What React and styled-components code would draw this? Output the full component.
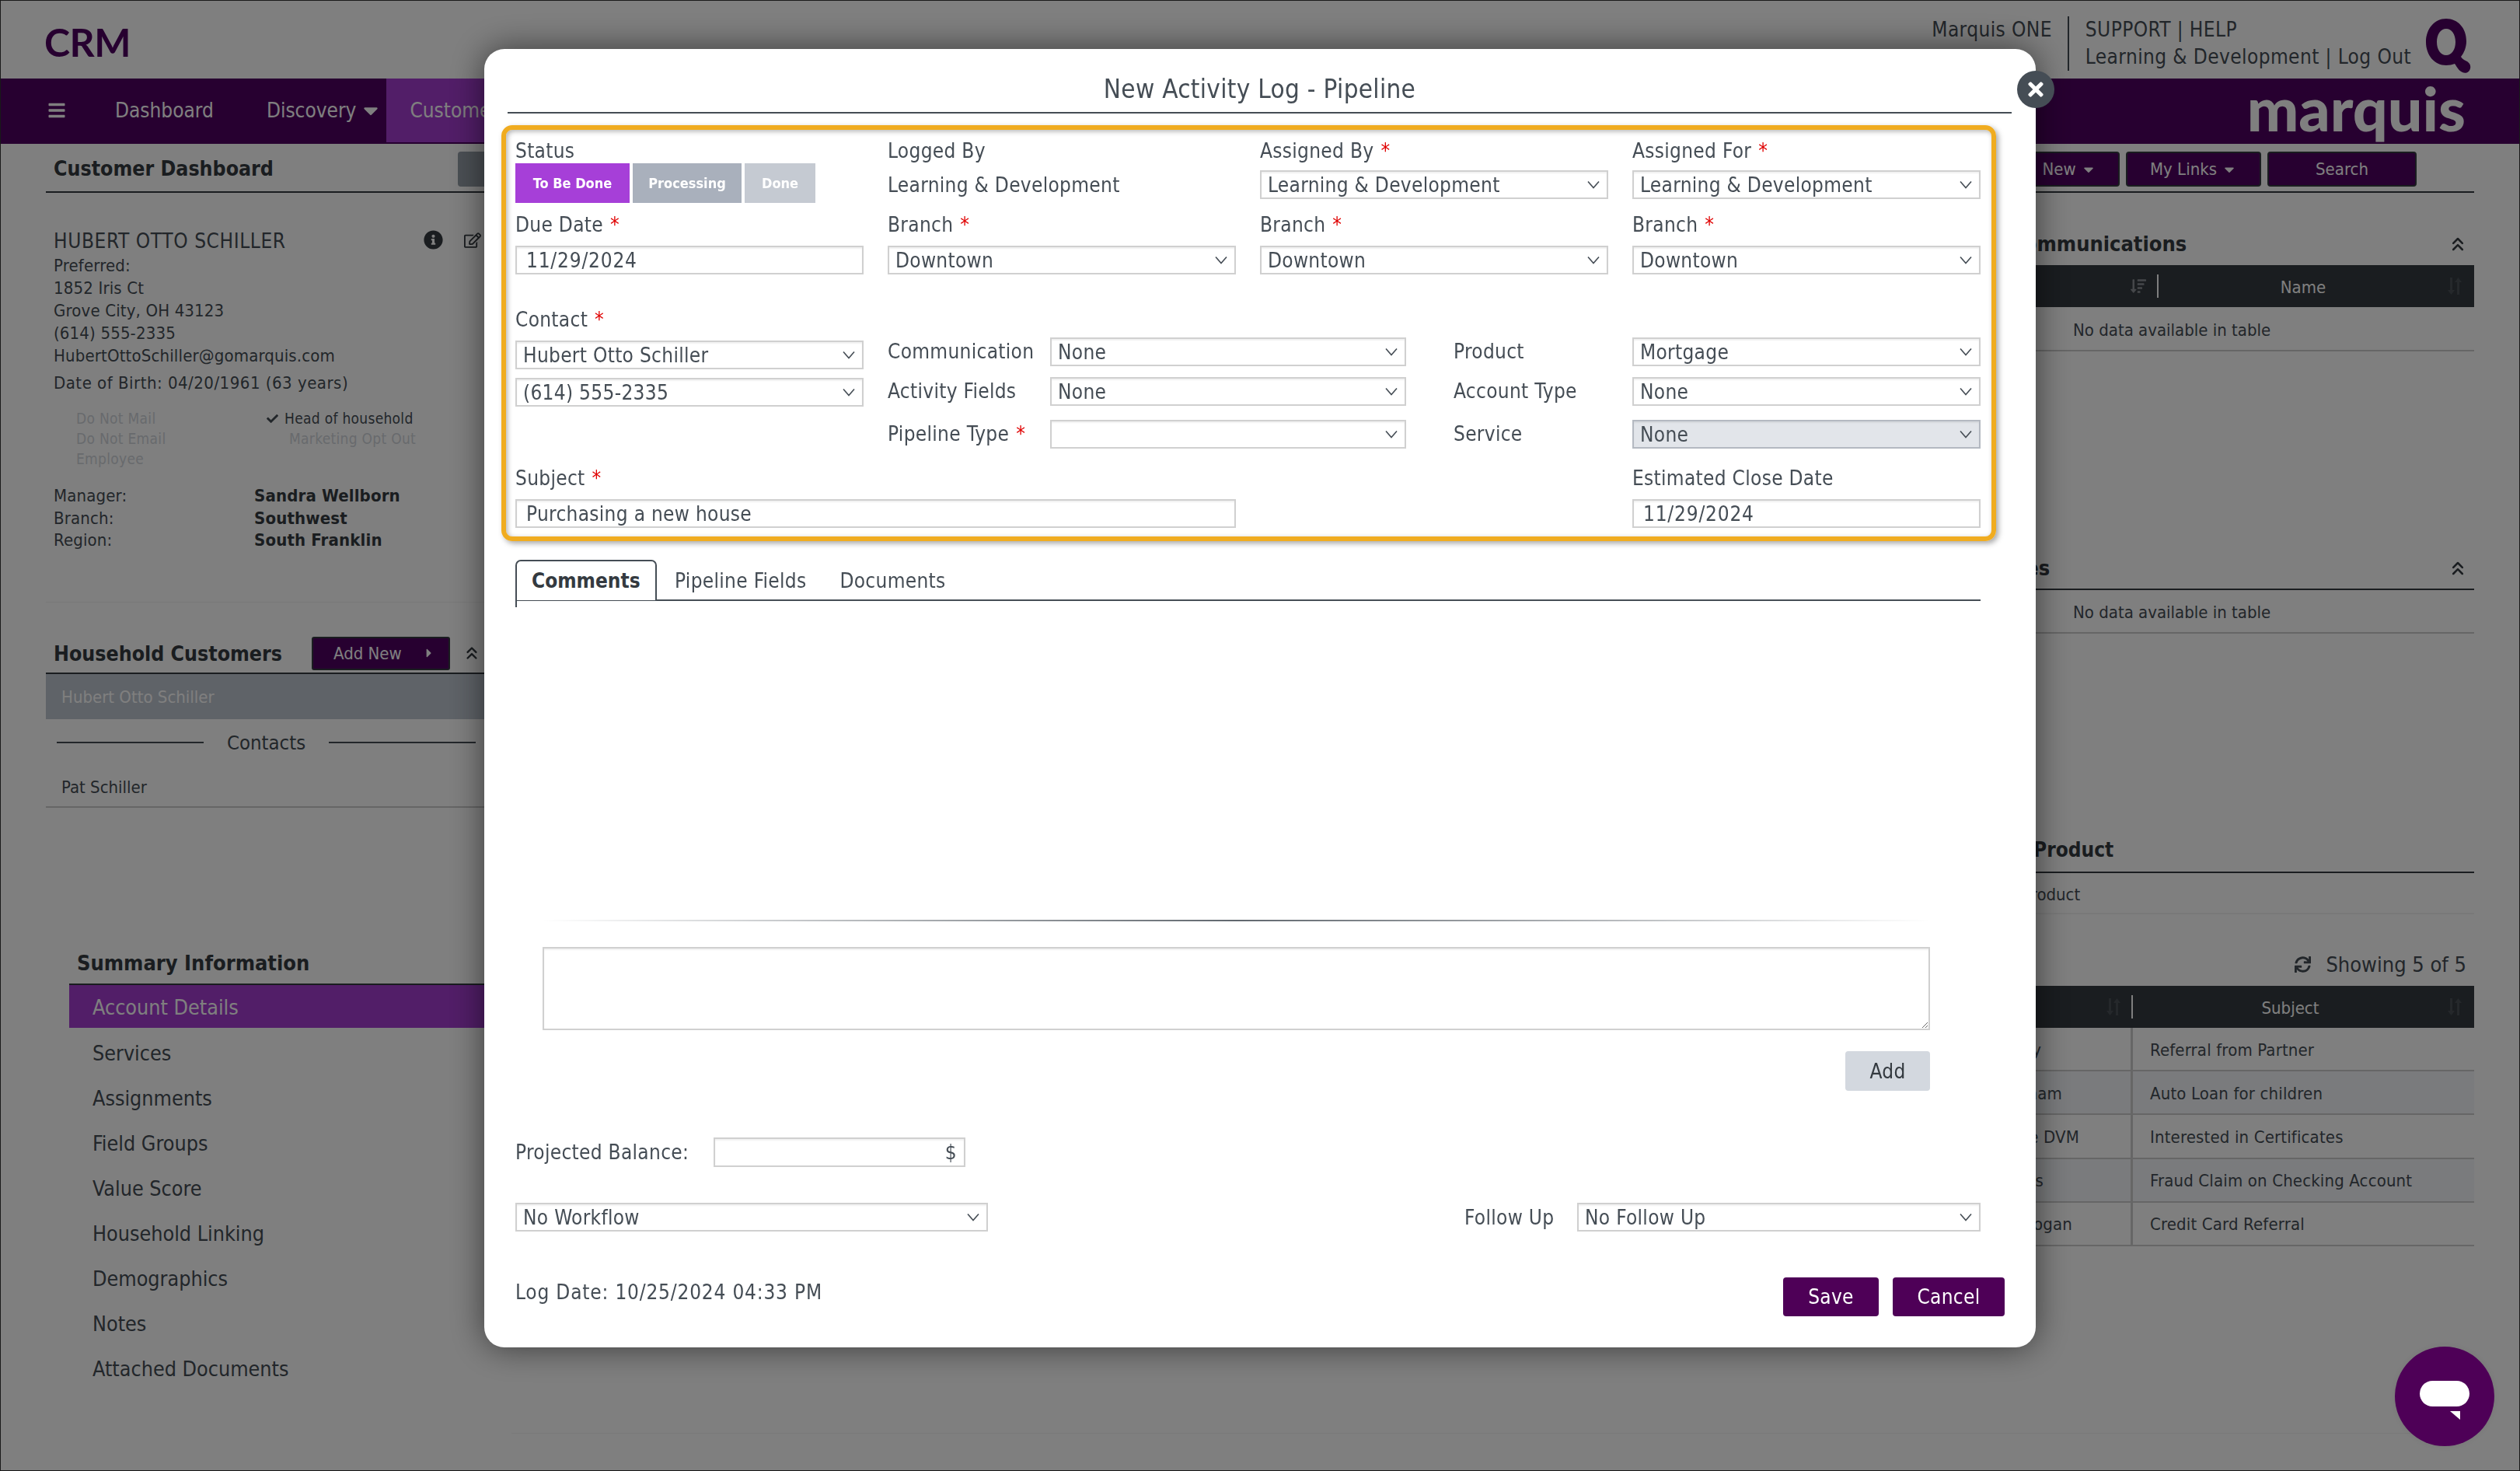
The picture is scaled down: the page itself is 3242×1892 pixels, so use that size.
import React from "react";
import styled, { createGlobalStyle } from "styled-components";
import { FaBars, FaCaretDown, FaCaretRight, FaCheck, FaInfoCircle, FaRegEdit, FaSortAmountDown, FaSync, FaTimes } from "react-icons/fa";
import { ChevronsUp } from "lucide-react";

const FONT = `"DejaVu Sans Condensed", "DejaVu Sans", Tahoma, sans-serif`;

const GlobalStyle = createGlobalStyle`
  html, body {
    margin: 0;
    padding: 0;
    width: 3242px;
    height: 1892px;
    overflow: hidden;
    background: #fff;
    font-family: ${FONT};
  }
  * { box-sizing: border-box; }
`;

/* ---------- page behind the dialog ---------- */

const Page = styled.div`
  width: 3242px;
  height: 1892px;
  border: 1px solid #333;
  background: #fff;
  color: #454d55;
  overflow: hidden;
`;

const TopBar = styled.header`
  height: 100px;
  display: flex;
  justify-content: space-between;
  padding: 20px 62px 0 56px;
`;

const CrmLogo = styled.div`
  margin-top: 7px;
  font-family: Lato, sans-serif;
  font-weight: 700;
  font-size: 50px;
  line-height: 52px;
  letter-spacing: -0.5px;
  color: #4e0060;
`;

const TopRight = styled.div`
  display: flex;
  align-items: flex-start;
  font-size: 26px;
  line-height: 35px;
  letter-spacing: 0.4px;
`;

const TopLinks = styled.div`
  border-left: 2px solid #454d55;
  margin: 0 0 0 20px;
  padding: 0 19px 0 21px;
  height: 70px;
`;

const QWrap = styled.div`
  margin-top: 3px;
`;

const NavBar = styled.nav`
  height: 84px;
  background: #4e0060;
  display: flex;
  align-items: flex-start;
  color: #fff;
  font-size: 26px;
  padding-left: 60px;
  position: relative;
`;

const NavItem = styled.div`
  height: 82px;
  display: flex;
  align-items: center;
  gap: 4px;
  margin-left: ${(p) => p.$ml || 0}px;
  padding: ${(p) => (p.$active ? "0 0 0 30px" : "0")};
  width: ${(p) => p.$w || "auto"};
  background: ${(p) => (p.$active ? "#a43cd0" : "transparent")};
`;

const MarquisLogo = styled.div`
  margin-left: auto;
  margin-right: 69px;
  font-family: Lato, sans-serif;
  font-weight: 900;
  font-size: 79px;
  line-height: 76px;
  color: #fff;
`;

const Toolbar = styled.div`
  height: 63px;
  margin: 0 58px;
  padding: 10px 74px 0 10px;
  display: flex;
  justify-content: space-between;
  border-bottom: 2px solid #343a40;
`;

const ToolbarLeft = styled.div`
  display: flex;
  align-items: flex-start;
  width: 600px;
`;

const PageTitle = styled.h1`
  margin: 0;
  width: 521px;
  font-size: 26.500px;
  line-height: 44px;
  font-weight: 700;
  color: #343a40;
`;

const GreyButton = styled.div`
  width: 80px;
  height: 45px;
  border-radius: 4px;
  background: #969fa9;
`;

const ToolbarRight = styled.div`
  display: flex;
  gap: 8px;
`;

const DarkButton = styled.div`
  width: ${(p) => p.$w}px;
  height: 45px;
  display: flex;
  align-items: center;
  justify-content: center;
  gap: 6px;
  background: #4e0060;
  border: 2px solid #343a40;
  border-radius: 4px;
  color: #fff;
  font-size: 22px;
`;

const Columns = styled.div`
  display: grid;
  grid-template-columns: 592px 1fr 693px;
  margin: 0 58px;
`;

const LeftColumn = styled.div`
  display: flex;
  flex-direction: column;
`;

const CustomerCard = styled.section`
  padding: 48px 10px 0;
  height: 527px;
  border-bottom: 1px solid #f3f3f3;
  font-size: 22px;
  line-height: 29px;
  letter-spacing: 0.15px;
  position: relative;
`;

const CustomerName = styled.div`
  font-size: 26px;
  line-height: 29px;
  letter-spacing: 0.6px;
  margin-bottom: 2px;
`;

const BirthDate = styled.div`
  margin-top: 6px;
  letter-spacing: 0.5px;
`;

const CardIcons = styled.div`
  position: absolute;
  top: 48px;
  left: 486px;
  display: flex;
  align-items: center;
  gap: 27px;
  font-size: 24px;
  color: #343a40;
`;

const Flags = styled.div`
  display: grid;
  grid-template-columns: 245px 1fr;
  margin: 18px 0 0 29px;
  font-size: 19px;
  line-height: 26px;
  letter-spacing: 0.3px;
`;

const Flag = styled.div`
  color: ${(p) => (p.$on ? "#454d55" : "#d0d4da")};
  padding-left: ${(p) => p.$indent || 0}px;
  display: flex;
  align-items: center;
  gap: 8px;
`;

const InfoGrid = styled.div`
  display: grid;
  grid-template-columns: 258px 1fr;
  margin-top: 21px;
  font-size: 22px;
  line-height: 28.5px;
  b { color: #343a40; }
`;

const SideHead = styled.div`
  display: flex;
  align-items: center;
  height: 57px;
  margin-top: 35px;
  padding: 5px 31px 0 10px;
  border-bottom: 2px solid #343a40;
`;

const SideTitle = styled.h2`
  margin: 0;
  flex: 1;
  font-size: 26.500px;
  font-weight: 700;
  color: #343a40;
`;

const AddNew = styled.div`
  width: 178px;
  height: 43px;
  display: flex;
  align-items: center;
  justify-content: space-between;
  padding: 0 16px 0 26px;
  background: #4e0060;
  border: 2px solid #343a40;
  border-radius: 3px;
  color: #fff;
  font-size: 22px;
  margin: 0 15px 0 0;
`;

const SelectedRow = styled.div`
  height: 58px;
  display: flex;
  align-items: center;
  padding-left: 20px;
  background: #bec6d0;
  color: #fff;
  font-size: 22px;
`;

const DividerRow = styled.div`
  display: flex;
  align-items: center;
  gap: 30px;
  height: 60px;
  padding: 0 39px 0 14px;
  font-size: 25.500px;
  &::before, &::after {
    content: "";
    flex: 1;
    height: 2px;
    background: #454d55;
  }
`;

const PlainRow = styled.div`
  height: 54px;
  display: flex;
  align-items: center;
  padding: 2px 0 0 20px;
  font-size: 22px;
  border-bottom: 2px solid #ccc;
`;

const SummaryPanel = styled.section`
  margin: 0 0 0 30px;
  padding-top: 188px;
`;

const SummaryTitle = styled.h2`
  margin: 0;
  height: 40px;
  padding-left: 10px;
  font-size: 27px;
  line-height: 23px;
  font-weight: 700;
  color: #343a40;
  border-bottom: 2px solid #343a40;
`;

const SummaryItem = styled.div`
  height: ${(p) => (p.$active ? 55 : 58)}px;
  display: flex;
  align-items: center;
  padding: 2px 0 0 30px;
  font-size: 26.700px;
  background: ${(p) => (p.$active ? "#a43cd0" : "transparent")};
  color: ${(p) => (p.$active ? "#fff" : "#454d55")};
  margin-bottom: ${(p) => (p.$active ? 2 : 0)}px;
`;

const RightColumn = styled.div`
  display: flex;
  flex-direction: column;
`;

const SectionHead = styled.div`
  display: flex;
  align-items: center;
  justify-content: space-between;
  margin-top: ${(p) => p.$mt}px;
  height: ${(p) => p.$h}px;
  padding: 0 7px ${(p) => p.$pb || 0}px ${(p) => p.$indent}px;
  border-bottom: ${(p) => (p.$rule ? "2px solid #343a40" : "0")};
`;

const SectionTitle = styled.h2`
  margin: 0;
  font-size: ${(p) => p.$size || 27}px;
  font-weight: 700;
  color: #343a40;
`;

const TableHeader = styled.div`
  display: grid;
  grid-template-columns: ${(p) => p.$first}px 1fr;
  height: ${(p) => p.$h}px;
  background: #343a40;
  color: #fff;
  font-size: 22px;
`;

const HeaderCell = styled.div`
  position: relative;
  display: flex;
  align-items: center;
  justify-content: flex-end;
  padding-right: 16px;
  &:first-child::after {
    content: "";
    position: absolute;
    right: 0;
    top: 12px;
    bottom: 12px;
    width: 2px;
    background: #fff;
  }
`;

const HeaderName = styled.span`
  flex: 1;
  text-align: center;
  padding-top: 2px;
`;

const RowNote = styled.div`
  height: ${(p) => p.$h}px;
  display: flex;
  align-items: center;
  padding: 3px 0 0 ${(p) => p.$indent}px;
  font-size: 22px;
  border-bottom: 2px solid ${(p) => p.$line || "#ccc"};
`;

const ShowingRow = styled.div`
  display: flex;
  align-items: center;
  justify-content: flex-end;
  gap: 19px;
  margin: 46px 0 9px;
  height: 37px;
  padding-right: 10px;
  font-size: 27px;
`;

const DataRow = styled.div`
  display: grid;
  grid-template-columns: 254px 1fr;
  height: 56.2px;
  font-size: 22px;
  letter-spacing: 0.15px;
  padding-top: 0;
  border-bottom: 2px solid #ccc;
  background: ${(p) => (p.$even ? "#f4f7fb" : "#fff")};
`;

const NameCell = styled.div`
  display: flex;
  align-items: center;
  justify-content: flex-end;
  padding: 2px ${(p) => p.$end}px 0 0;
  border-right: 3px solid #ccc;
`;

const SubjectCell = styled.div`
  display: flex;
  align-items: center;
  padding: 2px 0 0 22px;
`;

const FooterLine = styled.div`
  position: absolute;
  top: 1843px;
  left: 658px;
  right: 58px;
  height: 1px;
  background: #f3f3f3;
`;

/* ---------- dialog ---------- */

const Overlay = styled.div`
  position: fixed;
  inset: 0;
  background: rgba(0, 0, 0, 0.5);
  padding: 63px 0 0 623px;
`;

const Modal = styled.div`
  position: relative;
  width: 1996px;
  height: 1670px;
  padding: 0 31px 0 30px;
  background: #fff;
  border-radius: 26px;
  box-shadow: 0 0 44px rgba(0, 0, 0, 0.55);
  color: #454d55;
  font-size: 26px;
  letter-spacing: 0.3px;
`;

const CloseButton = styled.div`
  position: absolute;
  top: 28px;
  right: -24px;
  width: 48px;
  height: 48px;
  border-radius: 50%;
  background: #454d55;
  color: #fff;
  display: flex;
  align-items: center;
  justify-content: center;
  font-size: 28px;
`;

const ModalTitle = styled.h3`
  margin: 0;
  height: 83px;
  padding-top: 31px;
  text-align: center;
  font-size: 33px;
  line-height: 42px;
  font-weight: 400;
  border-bottom: 2px solid #454d55;
`;

const HighlightPanel = styled.div`
  margin: 15px 20px 0 -8px;
  height: 535px;
  padding: 13px 14px 0 12px;
  border: 6px solid #f0ac20;
  border-radius: 14px;
  box-shadow: 3px 3px 7px rgba(0, 0, 0, 0.35), inset 2px 2px 6px rgba(0, 0, 0, 0.3);
`;

const TopGrid = styled.div`
  display: grid;
  grid-template-columns: repeat(4, 1fr);
  grid-template-rows: 28px 53px 42px 50px;
  column-gap: 31px;
`;

const Label = styled.div`
  font-size: 26px;
  line-height: 28px;
  white-space: nowrap;
  align-self: ${(p) => p.$self || "start"};
`;

const Star = styled.span`
  color: #e00000;
  margin-left: 9px;
`;

const StatusRow = styled.div`
  align-self: end;
  display: flex;
  gap: 4px;
`;

const StatusButton = styled.div`
  width: ${(p) => p.$w}px;
  height: 51px;
  display: flex;
  align-items: center;
  justify-content: center;
  background: ${(p) => p.$bg};
  color: #fff;
  font-size: 18px;
  font-weight: 700;
  letter-spacing: 0;
`;

const PlainValue = styled.div`
  align-self: center;
  margin-top: 7px;
  line-height: 28px;
`;

const SelectBox = styled.div`
  position: relative;
  width: ${(p) => p.$w || "100%"};
  align-self: ${(p) => p.$self || "start"};
  margin-bottom: ${(p) => p.$mb || 0}px;
  color: #454d55;
`;

const NativeSelect = styled.select`
  display: block;
  width: 100%;
  height: 37px;
  padding: 0 34px 0 8px;
  appearance: none;
  border: 2px solid #d0d0d0;
  border-radius: 0;
  background: ${(p) => (p.$disabled ? "#e2e5ea" : "#fff")};
  border-color: ${(p) => (p.$disabled ? "#b4b9c1" : "#d0d0d0")};
  box-shadow: inset 0 2px 2px rgba(0, 0, 0, 0.06);
  color: #454d55;
  font-family: ${FONT};
  font-size: 26px;
  letter-spacing: 0.3px;
  outline: none;
`;

const Chevron = styled.svg`
  position: absolute;
  top: 13px;
  right: 11px;
  width: 16px;
  height: 11px;
  pointer-events: none;
`;

const TextBox = styled.input`
  display: block;
  width: 100%;
  height: ${(p) => p.$h || 37}px;
  padding: 0 ${(p) => (p.$align === "right" ? 9 : 12)}px;
  border: 2px solid #d0d0d0;
  background: #fff;
  box-shadow: inset 0 2px 2px rgba(0, 0, 0, 0.06);
  color: #454d55;
  font-family: ${FONT};
  font-size: 26px;
  letter-spacing: ${(p) => (p.$date ? 0.8 : 0.3)}px;
  text-align: ${(p) => p.$align || "left"};
  outline: none;
  align-self: end;
`;

const MiddleSplit = styled.div`
  display: grid;
  grid-template-columns: 448px 1fr;
  column-gap: 31px;
`;

const ContactStack = styled.div`
  padding-top: 44px;
  display: flex;
  flex-direction: column;
  gap: 11px;
`;

const ContactLabel = styled(Label)`
  margin-bottom: 2px;
`;

const MidGrid = styled.div`
  margin-top: 81px;
  display: grid;
  grid-template-columns: 209px 458px 61px 230px 448px;
  grid-template-rows: 51px 55px 37px;
  width: 1406px;
`;

const MidLabel = styled(Label)`
  grid-column: ${(p) => p.$col};
  line-height: 36px;
`;

const MidControl = styled.div`
  grid-column: ${(p) => p.$col};
`;

const BottomGrid = styled.div`
  display: grid;
  grid-template-columns: repeat(4, 1fr);
  column-gap: 31px;
  margin-top: 24px;
`;

const BottomField = styled.div`
  grid-column: ${(p) => p.$col};
  display: flex;
  flex-direction: column;
  gap: 13px;
`;

const TabBar = styled.div`
  display: flex;
  margin: 24px 40px 0 10px;
  height: 53px;
  border-bottom: 2px solid #454d55;
`;

const Tab = styled.div`
  position: relative;
  height: ${(p) => (p.$active ? 53 : 51)}px;
  display: flex;
  align-items: center;
  padding-top: ${(p) => (p.$active ? 0 : 2)}px;
  font-weight: ${(p) => (p.$active ? 700 : 400)};
  color: ${(p) => (p.$active ? "#343a40" : "#454d55")};
  padding-left: ${(p) => (p.$active ? 19 : 0)}px;
  margin-left: ${(p) => p.$ml || 0}px;
  ${(p) =>
    p.$active &&
    `
    width: 182px;
    letter-spacing: 0;
    border: 2px solid #454d55;
    border-bottom: 1px solid #454d55;
    border-radius: 7px 7px 0 0;
    background: #fff;
    &::after {
      content: "";
      position: absolute;
      left: -2px;
      top: 51px;
      width: 2px;
      height: 8px;
      background: #454d55;
    }
  `}
`;

const CommentsPane = styled.div`
  padding: 410px 0 0 45px;
  width: 1832px;
`;

const FadeRule = styled.div`
  width: 1785px;
  height: 2px;
  background: linear-gradient(90deg, rgba(69, 77, 85, 0), rgba(69, 77, 85, 0.85) 50%, rgba(69, 77, 85, 0));
`;

const CommentArea = styled.textarea`
  display: block;
  width: 1785px;
  height: 107px;
  margin-top: 33px;
  border: 2px solid #d0d0d0;
  box-shadow: inset 0 2px 2px rgba(0, 0, 0, 0.06);
  resize: vertical;
  outline: none;
  font-family: ${FONT};
`;

const AddRow = styled.div`
  display: flex;
  justify-content: flex-end;
  width: 1785px;
  margin-top: 27px;
`;

const AddButton = styled.div`
  width: 109px;
  height: 51px;
  display: flex;
  align-items: center;
  justify-content: center;
  background: #d3d8df;
  border-radius: 4px;
  color: #343a40;
`;

const BalanceRow = styled.div`
  display: flex;
  align-items: center;
  margin: 60px 0 0 10px;
`;

const BalanceLabel = styled.div`
  width: 255px;
`;

const WorkflowRow = styled.div`
  display: flex;
  align-items: center;
  justify-content: space-between;
  margin: 46px 40px 0 10px;
`;

const FollowUp = styled.div`
  display: flex;
  align-items: center;
`;

const FollowLabel = styled.div`
  width: 145px;
`;

const ModalFooter = styled.div`
  display: flex;
  align-items: center;
  justify-content: space-between;
  margin: 59px 9px 0 10px;
`;

const LogDate = styled.div`
  margin-top: -12px;
  letter-spacing: 0.8px;
`;

const FooterButtons = styled.div`
  display: flex;
  gap: 18px;
`;

const PrimaryButton = styled.div`
  width: ${(p) => p.$w}px;
  height: 50px;
  display: flex;
  align-items: center;
  justify-content: center;
  background: #4e0057;
  border-radius: 4px;
  color: #fff;
`;

const ChatBubble = styled.div`
  position: fixed;
  left: 3081px;
  top: 1732px;
  width: 128px;
  height: 128px;
  border-radius: 50%;
  background: #4e0057;
  box-shadow: 0 0 10px rgba(0, 0, 0, 0.08);
`;

function SelectArrow() {
  return (
    <Chevron viewBox="0 0 16 11">
      <path d="M1 1.5 8 9.5 15 1.5" fill="none" stroke="#454d55" strokeWidth="1.6" />
    </Chevron>
  );
}

function Dropdown({ value, width, self, mb, disabled }) {
  return (
    <SelectBox $w={width} $self={self} $mb={mb}>
      <NativeSelect defaultValue={value} $disabled={disabled} aria-label={value || "empty"}>
        <option>{value}</option>
      </NativeSelect>
      <SelectArrow />
    </SelectBox>
  );
}

function SortArrows({ color }) {
  return (
    <svg width="18" height="24" viewBox="0 0 18 24" fill={color}>
      <path d="M3 1h3v16h3l-4.500 6L0 17h3zM12 7H9l4.500-6L18 7h-3v16h-3z" />
    </svg>
  );
}

function QMark() {
  return (
    <svg width="58" height="70" viewBox="0 0 58 70">
      <path
        fillRule="evenodd"
        fill="#4e0060"
        d="M26 0c15 0 26 12 26 29 0 8-3 15-7 20 2 3 4 4 6 5 5 2 7 6 6 10-1 5-6 7-10 5-5-2-7-7-10-11-3 1-7 2-11 2C11 60 0 47 0 30S11 0 26 0zm0 13c-7 0-12 7-12 17s5 17 12 17 12-7 12-17-5-17-12-17z"
      />
    </svg>
  );
}

const sideLinks = ["Services", "Assignments", "Field Groups", "Value Score", "Household Linking", "Demographics", "Notes", "Attached Documents"];

const activityRows = [
  { name: "Kay", end: 115, subject: "Referral from Partner" },
  { name: "Graham", end: 88, subject: "Auto Loan for children" },
  { name: "Lee DVM", end: 66, subject: "Interested in Certificates" },
  { name: "Adams", end: 112, subject: "Fraud Claim on Checking Account" },
  { name: "Hogan", end: 75, subject: "Credit Card Referral" },
];

export default function App() {
  return (
    <>
      <GlobalStyle />
      <Page>
        <TopBar>
          <CrmLogo>CRM</CrmLogo>
          <TopRight>
            <div>Marquis ONE</div>
            <TopLinks>
              <div>SUPPORT | HELP</div>
              <div>Learning &amp; Development | Log Out</div>
            </TopLinks>
            <QWrap><QMark /></QWrap>
          </TopRight>
        </TopBar>

        <NavBar>
          <NavItem><FaBars size={24} /></NavItem>
          <NavItem $ml={63}>Dashboard</NavItem>
          <NavItem $ml={68}>Discovery <FaCaretDown size={30} /></NavItem>
          <NavItem $ml={5} $active $w="1500px">Customers</NavItem>
          <MarquisLogo>marquis</MarquisLogo>
        </NavBar>

        <Toolbar>
          <ToolbarLeft>
            <PageTitle>Customer Dashboard</PageTitle>
            <GreyButton />
          </ToolbarLeft>
          <ToolbarRight>
            <DarkButton $w={130}>New <FaCaretDown size={20} /></DarkButton>
            <DarkButton $w={174}>My Links <FaCaretDown size={20} /></DarkButton>
            <DarkButton $w={192}>Search</DarkButton>
          </ToolbarRight>
        </Toolbar>

        <Columns>
          <LeftColumn>
            <CustomerCard>
              <CustomerName>HUBERT OTTO SCHILLER</CustomerName>
              <CardIcons>
                <FaInfoCircle size={25} />
                <FaRegEdit size={22} />
              </CardIcons>
              <div>Preferred:</div>
              <div>1852 Iris Ct</div>
              <div>Grove City, OH 43123</div>
              <div>(614) 555-2335</div>
              <div>HubertOttoSchiller@gomarquis.com</div>
              <BirthDate>Date of Birth: 04/20/1961 (63 years)</BirthDate>
              <Flags>
                <Flag>Do Not Mail</Flag>
                <Flag $on><FaCheck size={15} />Head of household</Flag>
                <Flag>Do Not Email</Flag>
                <Flag $indent={29}>Marketing Opt Out</Flag>
                <Flag>Employee</Flag>
              </Flags>
              <InfoGrid>
                <span>Manager:</span><b>Sandra Wellborn</b>
                <span>Branch:</span><b>Southwest</b>
                <span>Region:</span><b>South Franklin</b>
              </InfoGrid>
            </CustomerCard>

            <SideHead>
              <SideTitle>Household Customers</SideTitle>
              <AddNew>Add New <FaCaretRight size={18} /></AddNew>
              <ChevronsUp size={26} strokeWidth={2.2} color="#343a40" />
            </SideHead>
            <SelectedRow>Hubert Otto Schiller</SelectedRow>
            <DividerRow>Contacts</DividerRow>
            <PlainRow>Pat Schiller</PlainRow>

            <SummaryPanel>
              <SummaryTitle>Summary Information</SummaryTitle>
              <SummaryItem $active>Account Details</SummaryItem>
              {sideLinks.map((item) => (
                <SummaryItem key={item}>{item}</SummaryItem>
              ))}
            </SummaryPanel>
          </LeftColumn>

          <div />

          <RightColumn>
            <SectionHead $mt={46} $h={47} $pb={8} $indent={96}>
              <SectionTitle>Communications</SectionTitle>
              <ChevronsUp size={28} strokeWidth={2.2} color="#343a40" />
            </SectionHead>
            <TableHeader $first={287} $h={54}>
              <HeaderCell><FaSortAmountDown size={20} color="#8a8f95" /></HeaderCell>
              <HeaderCell><HeaderName>Name</HeaderName><SortArrows color="#4b5157" /></HeaderCell>
            </TableHeader>
            <RowNote $h={57} $indent={177}>No data available in table</RowNote>

            <SectionHead $mt={252} $h={55} $rule $indent={19}>
              <SectionTitle>Activities</SectionTitle>
              <ChevronsUp size={28} strokeWidth={2.2} color="#343a40" />
            </SectionHead>
            <RowNote $h={56} $indent={177}>No data available in table</RowNote>

            <SectionHead $mt={250} $h={58} $rule $indent={126}>
              <SectionTitle $size={26}>Product</SectionTitle>
            </SectionHead>
            <RowNote $h={53} $indent={78} $line="#f3f3f3">No Product</RowNote>

            <ShowingRow>
              <FaSync size={21} />
              <span>Showing 5 of 5</span>
            </ShowingRow>
            <TableHeader $first={254} $h={54}>
              <HeaderCell><SortArrows color="#4b5157" /></HeaderCell>
              <HeaderCell><HeaderName>Subject</HeaderName><SortArrows color="#4b5157" /></HeaderCell>
            </TableHeader>
            {activityRows.map((row, i) => (
              <DataRow key={row.subject} $even={i % 2 === 1}>
                <NameCell $end={row.end}>{row.name}</NameCell>
                <SubjectCell>{row.subject}</SubjectCell>
              </DataRow>
            ))}
          </RightColumn>
        </Columns>
        <FooterLine />
      </Page>

      <Overlay>
        <Modal>
          <CloseButton><FaTimes /></CloseButton>
          <ModalTitle>New Activity Log - Pipeline</ModalTitle>

          <HighlightPanel>
            <TopGrid>
              <Label>Status</Label>
              <Label>Logged By</Label>
              <Label>Assigned By<Star>*</Star></Label>
              <Label>Assigned For<Star>*</Star></Label>

              <StatusRow>
                <StatusButton $w={147} $bg="#a63fd8">To Be Done</StatusButton>
                <StatusButton $w={140} $bg="#a9b0bc">Processing</StatusButton>
                <StatusButton $w={91} $bg="#c5cad2">Done</StatusButton>
              </StatusRow>
              <PlainValue>Learning &amp; Development</PlainValue>
              <Dropdown value="Learning & Development" self="end" mb={5} />
              <Dropdown value="Learning & Development" self="end" mb={5} />

              <Label $self="end">Due Date<Star>*</Star></Label>
              <Label $self="end">Branch<Star>*</Star></Label>
              <Label $self="end">Branch<Star>*</Star></Label>
              <Label $self="end">Branch<Star>*</Star></Label>

              <TextBox defaultValue="11/29/2024" $date />
              <Dropdown value="Downtown" self="end" />
              <Dropdown value="Downtown" self="end" />
              <Dropdown value="Downtown" self="end" />
            </TopGrid>

            <MiddleSplit>
              <ContactStack>
                <ContactLabel>Contact<Star>*</Star></ContactLabel>
                <Dropdown value="Hubert Otto Schiller" />
                <Dropdown value="(614) 555-2335" />
              </ContactStack>
              <MidGrid>
                <MidLabel $col={1}>Communication</MidLabel>
                <MidControl $col={2}><Dropdown value="None" /></MidControl>
                <MidLabel $col={4}>Product</MidLabel>
                <MidControl $col={5}><Dropdown value="Mortgage" /></MidControl>

                <MidLabel $col={1}>Activity Fields</MidLabel>
                <MidControl $col={2}><Dropdown value="None" /></MidControl>
                <MidLabel $col={4}>Account Type</MidLabel>
                <MidControl $col={5}><Dropdown value="None" /></MidControl>

                <MidLabel $col={1}>Pipeline Type<Star>*</Star></MidLabel>
                <MidControl $col={2}><Dropdown value="" /></MidControl>
                <MidLabel $col={4}>Service</MidLabel>
                <MidControl $col={5}><Dropdown value="None" disabled /></MidControl>
              </MidGrid>
            </MiddleSplit>

            <BottomGrid>
              <BottomField $col="1 / span 2">
                <Label>Subject<Star>*</Star></Label>
                <TextBox defaultValue="Purchasing a new house" />
              </BottomField>
              <BottomField $col="4">
                <Label>Estimated Close Date</Label>
                <TextBox defaultValue="11/29/2024" $date />
              </BottomField>
            </BottomGrid>
          </HighlightPanel>

          <TabBar>
            <Tab $active>Comments</Tab>
            <Tab $ml={23}>Pipeline Fields</Tab>
            <Tab $ml={43}>Documents</Tab>
          </TabBar>

          <CommentsPane>
            <FadeRule />
            <CommentArea aria-label="Comment" />
            <AddRow><AddButton>Add</AddButton></AddRow>
          </CommentsPane>

          <BalanceRow>
            <BalanceLabel>Projected Balance:</BalanceLabel>
            <SelectBox $w="324px"><TextBox defaultValue="$" $align="right" $h={38} /></SelectBox>
          </BalanceRow>

          <WorkflowRow>
            <Dropdown value="No Workflow" width="608px" />
            <FollowUp>
              <FollowLabel>Follow Up</FollowLabel>
              <Dropdown value="No Follow Up" width="519px" />
            </FollowUp>
          </WorkflowRow>

          <ModalFooter>
            <LogDate>Log Date: 10/25/2024 04:33 PM</LogDate>
            <FooterButtons>
              <PrimaryButton $w={123}>Save</PrimaryButton>
              <PrimaryButton $w={144}>Cancel</PrimaryButton>
            </FooterButtons>
          </ModalFooter>
        </Modal>
      </Overlay>

      <ChatBubble>
        <svg width="128" height="128" viewBox="0 0 128 128">
          <rect x="32" y="44" width="64" height="33" rx="16.500" fill="#fff" />
          <path d="M71 83h13v11z" fill="#fff" />
        </svg>
      </ChatBubble>
    </>
  );
}
